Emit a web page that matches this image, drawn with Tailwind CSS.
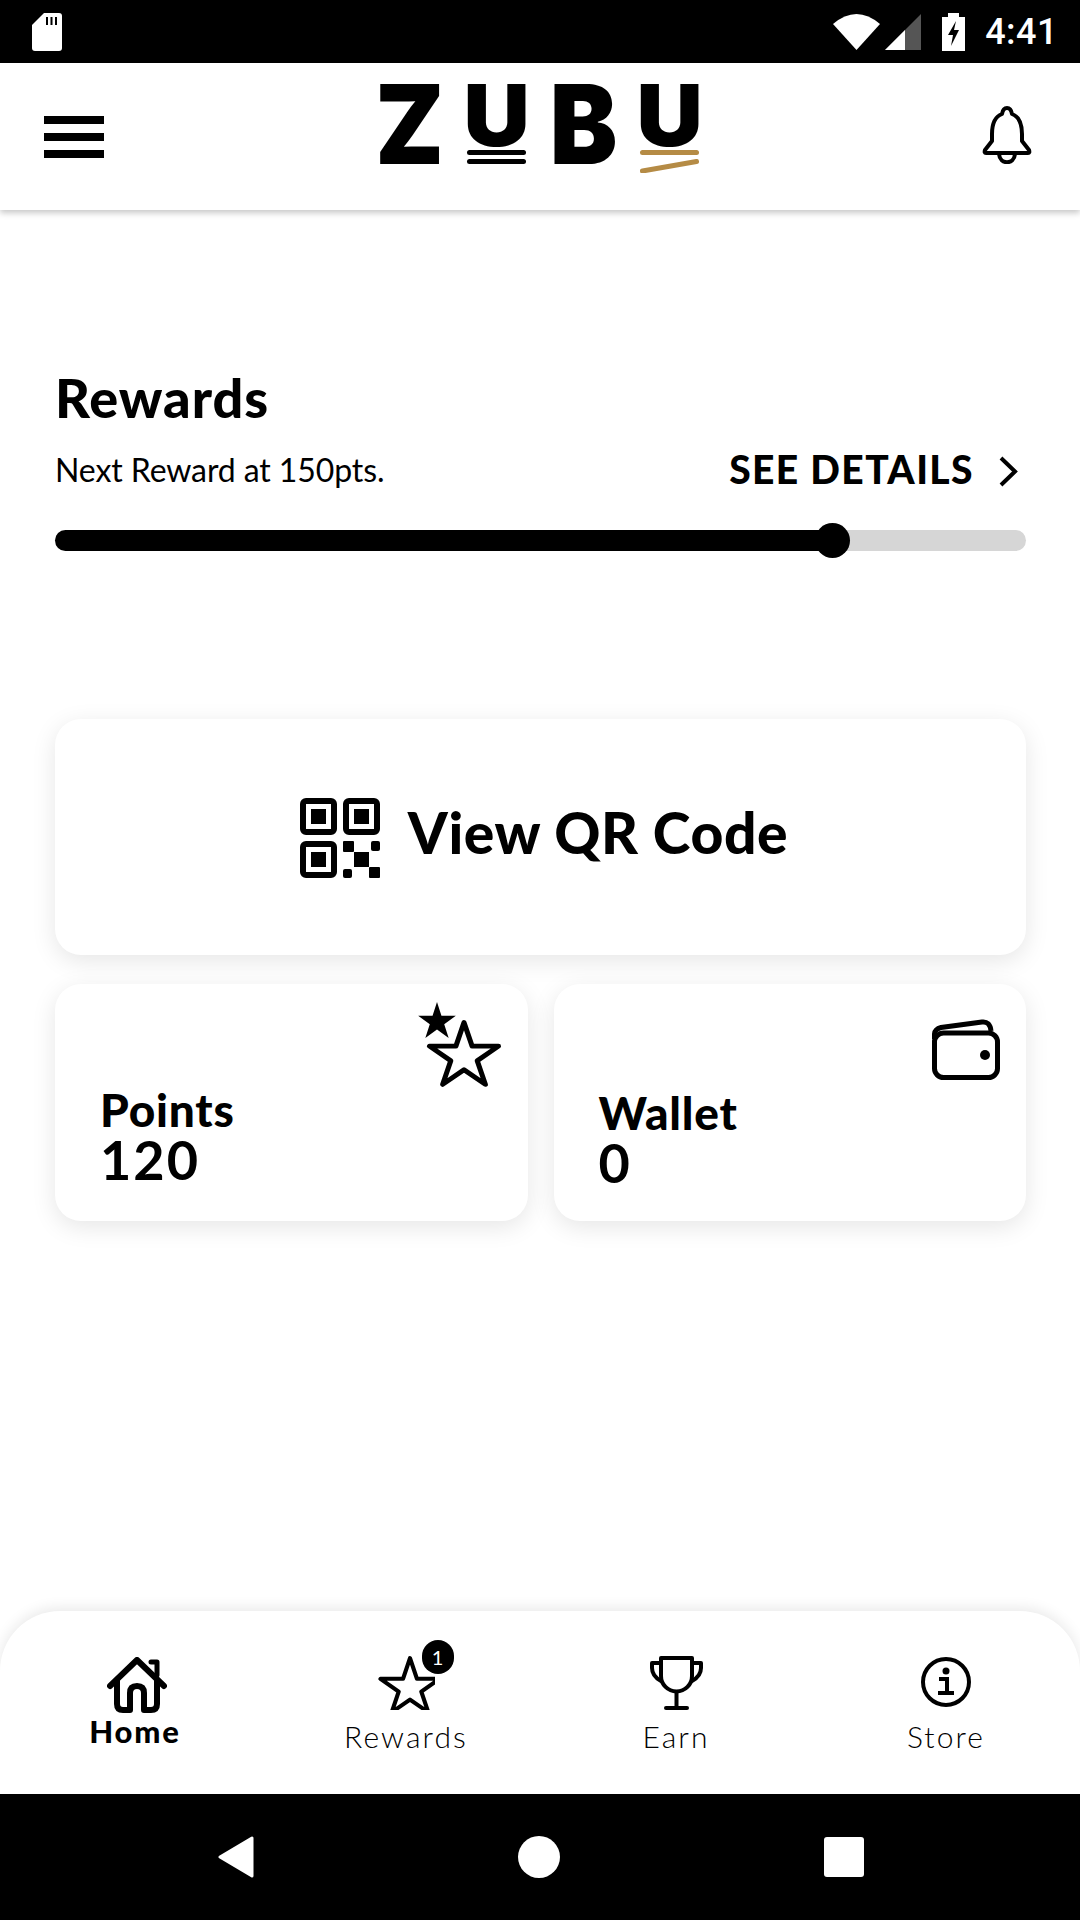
<!DOCTYPE html>
<html lang="en">
<head>
    <meta charset="UTF-8">
    <meta name="viewport" content="width=device-width, initial-scale=1.0">
    <title>Zubu</title>
    <script src="https://cdn.jsdelivr.net/npm/@tailwindcss/browser@4"></script>
</head>
<body class="font-['Lato',sans-serif] bg-white text-black">
<div class="w-[1080px] h-[1920px] flex flex-col overflow-hidden">

    <!-- status bar -->
    <div class="h-[63px] bg-black flex items-center pl-[32px] pr-[22px] text-white">
        <svg width="30" height="38" viewBox="0 0 30 38"><path fill="#fff" d="M12 0H27a3 3 0 0 1 3 3V35a3 3 0 0 1-3 3H3a3 3 0 0 1-3-3V12Z"/><path stroke="#000" stroke-width="2" d="M15 4V12M19.500 4V12M24 4V12"/></svg>
        <div class="flex-1"></div>
        <svg width="47" height="36" viewBox="0 0 47 36"><path fill="#fff" d="M0 10Q23.500-10 47 10L23.500 36Z"/></svg>
        <svg class="ml-[5px]" width="36" height="36" viewBox="0 0 36 36"><path fill="#555" d="M36 0V36H0Z"/><path fill="#fff" d="M20 16V36H0Z"/></svg>
        <svg class="ml-[21px]" width="23" height="38" viewBox="0 0 23 38"><path fill="#fff" d="M6 0H17V4H23V38H0V4H6Z"/><path fill="#000" d="M14 8L6 22H11L9 33L17 17H12Z"/></svg>
        <span class="ml-[20px] font-['Roboto',sans-serif] font-medium text-[36px] leading-[40px] tracking-[0.5px]">4:41</span>
    </div>

    <!-- header -->
    <header class="relative z-10 h-[147px] bg-white shadow-[0_3px_6px_rgba(0,0,0,0.22)] flex items-start">
        <div class="ml-[44px] mt-[53px] w-[60px] flex flex-col gap-[9px]">
            <div class="h-[8px] bg-black"></div>
            <div class="h-[8px] bg-black"></div>
            <div class="h-[8px] bg-black"></div>
        </div>
        <!-- logo -->
        <div class="ml-[276px] mt-[21px] flex font-['Inter',sans-serif] font-black">
            <span class="w-[59px] h-[80px] text-[110px] leading-[80px] flex justify-center scale-x-[0.9]">Z</span>
            <div class="ml-[28px] w-[59px] flex flex-col items-center">
                <span class="h-[62px] text-[85px] leading-[62px] scale-x-[1.08] translate-y-[1px]">U</span>
                <div class="mt-[4px] w-full h-[5px] rounded-full bg-black"></div>
                <div class="mt-[4px] w-full h-[5px] rounded-full bg-black"></div>
            </div>
            <span class="ml-[28px] w-[59px] h-[80px] text-[110px] leading-[80px] flex justify-center scale-x-[0.92]">B</span>
            <div class="ml-[27px] w-[59px] flex flex-col items-center">
                <span class="h-[62px] text-[85px] leading-[62px] scale-x-[1.08] translate-y-[1px]">U</span>
                <div class="mt-[4px] w-full h-[5px] rounded-full bg-[#b58b45]"></div>
                <svg class="mt-[4px]" width="59" height="14" viewBox="0 0 59 14"><path d="M2.500 12L56.500 2.500" stroke="#b58b45" stroke-width="5" stroke-linecap="round"/></svg>
            </div>
        </div>
        <svg class="ml-[283px] mt-[43px]" width="50" height="58" viewBox="0 0 50 58" fill="none" stroke="#000" stroke-width="4" stroke-linejoin="round"><path d="M25 2Q29 2 30 8C38 11 40 19 40 28V35L47 44Q48 47 46 47H4Q2 47 3 44L10 35V28C10 19 12 11 20 8Q21 2 25 2Z"/><path d="M17 48C18 59 32 59 33 48"/></svg>
    </header>

    <main class="flex-1 pl-[55px] pr-[54px] pt-[158px]">
        <!-- rewards -->
        <h1 class="font-black text-[54px] leading-[60px] tracking-[1px]">Rewards</h1>
        <div class="mt-[21px] h-[40px] flex items-center justify-between">
            <span class="text-[32px] leading-[40px] tracking-[-0.1px] translate-y-[1px]">Next Reward at 150pts.</span>
            <div class="flex items-center pr-[8px]">
                <span class="font-black text-[39px] leading-[40px] tracking-[1.4px]">SEE DETAILS</span>
                <svg class="ml-[24px] mt-[4px]" width="20" height="31" viewBox="0 0 20 31" fill="none" stroke="#000" stroke-width="4"><path d="M3 2L17 15.500L3 29"/></svg>
            </div>
        </div>
        <div class="relative mt-[41px] h-[21px] rounded-full bg-[#d6d6d6]">
            <div class="h-full w-[776px] rounded-full bg-black"></div>
            <div class="absolute left-[760px] top-[-7px] w-[35px] h-[35px] rounded-full bg-black"></div>
        </div>

        <!-- qr code card -->
        <div class="mt-[168px] h-[236px] rounded-[26px] bg-white shadow-[0_6px_24px_rgba(0,0,0,0.1)] flex items-center justify-center pl-[7px]">
            <svg class="mt-[2px]" width="80" height="80" viewBox="0 0 80 80">
                <g fill="none" stroke="#000" stroke-width="6">
                    <rect x="3" y="3" width="31" height="31" rx="3"/>
                    <rect x="46" y="3" width="31" height="31" rx="3"/>
                    <rect x="3" y="46" width="31" height="31" rx="3"/>
                </g>
                <rect x="11" y="11" width="15" height="15"/>
                <rect x="54" y="11" width="15" height="15"/>
                <rect x="11" y="54" width="15" height="15"/>
                <rect x="43" y="43" width="11" height="11" rx="1"/>
                <rect x="71" y="43" width="9" height="10" rx="2"/>
                <rect x="54" y="54" width="15" height="15"/>
                <rect x="43" y="71" width="9" height="9" rx="2"/>
                <rect x="69" y="69" width="11" height="11" rx="1"/>
            </svg>
            <span class="ml-[28px] mb-[10px] font-black text-[57px] leading-[64px] tracking-[0.6px]">View QR Code</span>
        </div>

        <!-- points and wallet -->
        <div class="mt-[29px] grid grid-cols-2 gap-[26px]">
            <div class="relative h-[237px] rounded-[26px] bg-white shadow-[0_6px_24px_rgba(0,0,0,0.1)] pl-[45px] pt-[101px]">
                <svg class="absolute right-[24px] top-[16px]" width="90" height="90" viewBox="0 0 90 90">
                    <polygon transform="translate(1 -1) scale(.44)" points="50,7 60.100,38.100 92.800,38.100 66.400,57.300 76.500,88.400 50,69.200 23.500,88.400 33.600,57.300 7.200,38.100 39.900,38.100"/>
                    <polygon transform="translate(9.700 17.200) scale(.806 .76)" fill="#fff" stroke="#000" stroke-width="6.300" stroke-linejoin="round" points="50,7 60.100,38.100 92.800,38.100 66.400,57.300 76.500,88.400 50,69.200 23.500,88.400 33.600,57.300 7.200,38.100 39.900,38.100"/>
                </svg>
                <div class="font-black text-[46px] leading-[50px] tracking-[0.8px]">Points</div>
                <div class="text-[54px] leading-[50px] font-bold tracking-[2px]">120</div>
            </div>
            <div class="relative h-[237px] rounded-[26px] bg-white shadow-[0_6px_24px_rgba(0,0,0,0.1)] pl-[45px] pt-[104px]">
                <svg class="absolute right-[26px] top-[35px]" width="68" height="61" viewBox="0 0 68 61" fill="none" stroke="#000" stroke-width="5">
                    <rect x="2.500" y="14" width="63" height="44.500" rx="9"/>
                    <path d="M2.500 20V15Q3 10 9 8.500L50 3Q58 2 59 12"/>
                    <circle cx="53" cy="36" r="5" fill="#000" stroke="none"/>
                </svg>
                <div class="font-black text-[46px] leading-[50px] tracking-[0.8px]">Wallet</div>
                <div class="text-[54px] leading-[50px] font-bold">0</div>
            </div>
        </div>
    </main>

    <!-- bottom tabs -->
    <nav class="h-[183px] rounded-t-[60px] bg-white shadow-[0_-3px_14px_rgba(0,0,0,0.09)] grid grid-cols-4 pt-[44px]">
        <div class="flex flex-col items-center">
            <div class="h-[58px] flex items-end">
                <svg class="ml-[4px]" width="60" height="56" viewBox="0 0 60 56" fill="none" stroke="#000" stroke-width="6" stroke-linejoin="round" stroke-linecap="round">
                    <path d="M3 29L30 3L57 29"/>
                    <path d="M44 5H50V18" stroke-width="5"/>
                    <path d="M10 24V47Q10 53 16 53H23V36Q23 29 30 29Q37 29 37 36V53H44Q50 53 50 47V24"/>
                </svg>
            </div>
            <span class="mt-[1px] font-black text-[31px] leading-[34px] tracking-[1.8px]">Home</span>
        </div>
        <div class="flex flex-col items-center">
            <div class="relative h-[58px]">
                <svg width="59" height="55" viewBox="0 0 59 55">
                    <polygon transform="translate(-0.500 -1.500) scale(.69 .665)" fill="none" stroke="#000" stroke-width="6" stroke-linejoin="round" points="50,7 60.100,38.100 92.800,38.100 66.400,57.300 76.500,88.400 50,69.200 23.500,88.400 33.600,57.300 7.200,38.100 39.900,38.100"/>
                </svg>
                <span class="absolute left-[46px] top-[-15px] w-[32px] h-[34px] rounded-full bg-black text-white text-[20px] leading-[34px] text-center">1</span>
            </div>
            <span class="mt-[6px] ml-[2px] text-[30px] leading-[34px] font-light tracking-[2.1px]">Rewards</span>
        </div>
        <div class="flex flex-col items-center">
            <svg class="ml-[2px]" width="55" height="58" viewBox="0 0 55 58" fill="none" stroke="#000" stroke-width="4" stroke-linecap="round" stroke-linejoin="round">
                <path d="M12 3H43V21A15.500 15.500 0 0 1 12 21Z"/>
                <path d="M12 8H3V13Q3 21 12 26"/>
                <path d="M43 8H52V13Q52 21 43 26"/>
                <path d="M27.500 37V53"/>
                <path d="M17 53H38"/>
            </svg>
            <span class="mt-[6px] ml-[2px] text-[30px] leading-[34px] font-light tracking-[2.1px]">Earn</span>
        </div>
        <div class="flex flex-col items-center">
            <svg class="ml-[2px]" width="50" height="58" viewBox="0 0 50 58" fill="none" stroke="#000" stroke-width="4">
                <circle cx="25" cy="27" r="23"/>
                <circle cx="25" cy="16" r="3.500" fill="#000" stroke="none"/>
                <path d="M18 24H26V38M17 38H33"/>
            </svg>
            <span class="mt-[6px] ml-[2px] text-[30px] leading-[34px] font-light tracking-[2.1px]">Store</span>
        </div>
    </nav>

    <!-- android nav bar -->
    <div class="h-[126px] bg-black flex items-center justify-center gap-[264px] pl-[2px]">
        <svg width="36" height="42" viewBox="0 0 36 42"><path fill="#fff" stroke="#fff" stroke-width="3" stroke-linejoin="round" d="M34 2V40L2 21Z"/></svg>
        <div class="w-[42px] h-[42px] rounded-full bg-white"></div>
        <div class="w-[40px] h-[40px] rounded-[3px] bg-white"></div>
    </div>
</div>
</body>
</html>
